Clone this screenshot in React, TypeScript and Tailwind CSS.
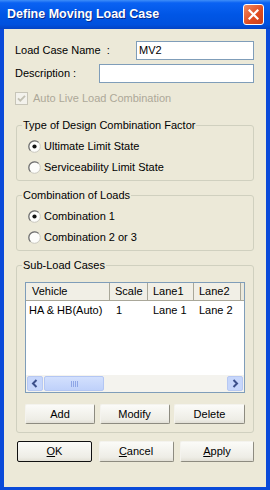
import React from 'react'

function Radio({ checked, label }: { checked?: boolean; label: string }) {
  return (
    <div className="flex h-[21px] items-center">
      <svg width="13" height="13" viewBox="0 0 13 13" className="ml-[11px] shrink-0">
        <circle cx="6.5" cy="6.5" r="5.8" fill="#fdfdfb" stroke="#c9c8bf" />
        <path d="M2.4 10.6 A5.8 5.8 0 0 1 10.6 2.4" fill="none" stroke="#707070" strokeWidth="1.2" />
        {checked && <circle cx="6.5" cy="6.5" r="2.1" fill="#111" />}
      </svg>
      <span className="ml-[3px]">{label}</span>
    </div>
  )
}

function Group({ title, className, children }: { title: string; className?: string; children: React.ReactNode }) {
  return (
    <div className={`relative rounded-[3px] border border-[#D0D0BF] ${className ?? ''}`}>
      <span className="absolute left-[5px] top-[-7px] bg-[#ECE9D8] px-[1px] leading-[13px]">{title}</span>
      {children}
    </div>
  )
}

function Btn({ children, def, className }: { children: React.ReactNode; def?: boolean; className?: string }) {
  return (
    <div
      className={`flex h-[21px] items-center justify-center rounded-[2px] bg-[linear-gradient(#fbfbf8,#eeede6_80%,#e2e0d6)] ${
        def
          ? 'border border-[#111]'
          : 'border border-t-[#f4f3ee] border-l-[#f4f3ee] border-b-[#8d8b80] border-r-[#8d8b80]'
      } ${className ?? ''}`}
    >
      {children}
    </div>
  )
}

function Arrow({ dir }: { dir: 'l' | 'r' }) {
  return (
    <div className="flex h-[15px] w-[16px] items-center justify-center rounded-[2px] border border-[#b7c8f2] bg-[#c6d6fb]">
      <svg width="8" height="9" viewBox="0 0 8 9">
        <path
          d={dir === 'l' ? 'M5.5 1 L2 4.5 L5.5 8' : 'M2.5 1 L6 4.5 L2.5 8'}
          fill="none"
          stroke="#3b4f8a"
          strokeWidth="2"
        />
      </svg>
    </div>
  )
}

export default function App() {
  return (
    <div className="flex h-[490px] w-[270px] flex-col bg-[#0a4ad9] font-['Liberation_Sans',Arial,sans-serif] text-[11px] text-black">
      {/* title bar */}
      <div className="flex h-[29px] shrink-0 items-center bg-[linear-gradient(to_bottom,#3f8ef8_0%,#0a62f3_10%,#0056e6_50%,#0051de_85%,#0443c4_100%)] pl-[7px] pr-[6px]">
        <span className="text-[12.5px] font-bold text-white [text-shadow:1px_1px_0_#0a2a8a]">Define Moving Load Case</span>
        <div className="ml-auto flex h-[21px] w-[21px] items-center justify-center rounded-[3px] border border-white bg-[linear-gradient(135deg,#ef8a62,#df4a1f_60%,#c8401c)]">
          <svg width="11" height="11" viewBox="0 0 11 11">
            <path d="M1.5 1.5 L9.5 9.5 M9.5 1.5 L1.5 9.5" stroke="#fff" strokeWidth="2.2" strokeLinecap="square" />
          </svg>
        </div>
      </div>

      {/* body */}
      <div className="mx-[4px] mb-[3px] flex flex-1 flex-col bg-[#ECE9D8] px-[12px] pt-[12px]">
        <div className="flex h-[19px] items-center">
          <span className="-ml-[1px] whitespace-pre">Load Case Name  :</span>
          <div className="ml-auto flex h-[19px] w-[118px] items-center border border-[#7F9DB9] bg-white pl-[2px]">MV2</div>
        </div>
        <div className="mt-[4px] flex h-[19px] items-center">
          <span className="-ml-[1px]">Description :</span>
          <div className="ml-auto h-[19px] w-[155px] border border-[#7F9DB9] bg-white" />
        </div>
        <div className="mt-[9px] flex h-[13px] items-center">
          <svg width="13" height="13" viewBox="0 0 13 13" className="-ml-[1px] shrink-0">
            <rect x="0.5" y="0.5" width="12" height="12" fill="#f3f2ec" stroke="#c7c5b8" />
            <path d="M3 6.3 L5.3 8.7 L10 3.8" fill="none" stroke="#c2c0b2" strokeWidth="1.8" />
          </svg>
          <span className="ml-[5px] text-[#ACA899]">Auto Live Load Combination</span>
        </div>

        <Group title="Type of Design Combination Factor" className="mt-[20px] pb-[2px] pt-[10px]">
          <Radio checked label="Ultimate Limit State" />
          <Radio label="Serviceability Limit State" />
        </Group>

        <Group title="Combination of Loads" className="mt-[14px] pb-[2px] pt-[10px]">
          <Radio checked label="Combination 1" />
          <Radio label="Combination 2 or 3" />
        </Group>

        <Group title="Sub-Load Cases" className="mt-[14px] px-[8px] pb-[8px] pt-[16px]">
          <div className="flex h-[111px] flex-col border border-[#7F9DB9] bg-white">
            <div className="flex h-[18px] shrink-0">
              <div className="flex w-[84px] items-center border-b border-r border-[#a9a799] bg-[#f1efe6] pl-[6px]">Vehicle</div>
              <div className="flex w-[38px] items-center border-b border-r border-[#a9a799] bg-[#f1efe6] pl-[5px]">Scale</div>
              <div className="flex w-[46px] items-center border-b border-r border-[#a9a799] bg-[#f1efe6] pl-[5px]">Lane1</div>
              <div className="flex w-[47px] items-center border-b border-r border-[#a9a799] bg-[#f1efe6] pl-[5px]">Lane2</div>
              <div className="flex-1 border-b border-[#a9a799] bg-[#ebe9dc]" />
            </div>
            <div className="mt-[1px] flex h-[17px] items-center">
              <div className="w-[84px] pl-[3px]">HA &amp; HB(Auto)</div>
              <div className="w-[38px] pl-[6px]">1</div>
              <div className="w-[46px] pl-[5px]">Lane 1</div>
              <div className="w-[47px] pl-[5px]">Lane 2</div>
            </div>
            <div className="flex-1" />
            <div className="flex h-[17px] shrink-0 items-center bg-[#f4f3ee] px-[1px]">
              <Arrow dir="l" />
              <div className="ml-[1px] flex h-[15px] w-[60px] items-center justify-center rounded-[2px] border border-[#b3c6f3] bg-[linear-gradient(#d3e0fd,#bfd1fa)]">
                <svg width="7" height="6" viewBox="0 0 7 6">
                  <path d="M0.5 0 V6 M2.5 0 V6 M4.5 0 V6 M6.5 0 V6" stroke="#8ea6e6" strokeWidth="1" />
                </svg>
              </div>
              <div className="flex-1" />
              <Arrow dir="r" />
            </div>
          </div>
          <div className="mt-[11px] flex justify-between">
            <Btn className="w-[70px] !h-[20px]">Add</Btn>
            <Btn className="w-[70px] !h-[20px]">Modify</Btn>
            <Btn className="w-[71px] !h-[20px]">Delete</Btn>
          </div>
        </Group>

        <div className="mt-[8px] flex justify-between pl-[1px]">
          <Btn def className="w-[75px]">
            <span><span className="underline">O</span>K</span>
          </Btn>
          <Btn className="w-[75px]">
            <span><span className="underline">C</span>ancel</span>
          </Btn>
          <Btn className="w-[74px]">
            <span><span className="underline">A</span>pply</span>
          </Btn>
        </div>
      </div>
    </div>
  )
}
